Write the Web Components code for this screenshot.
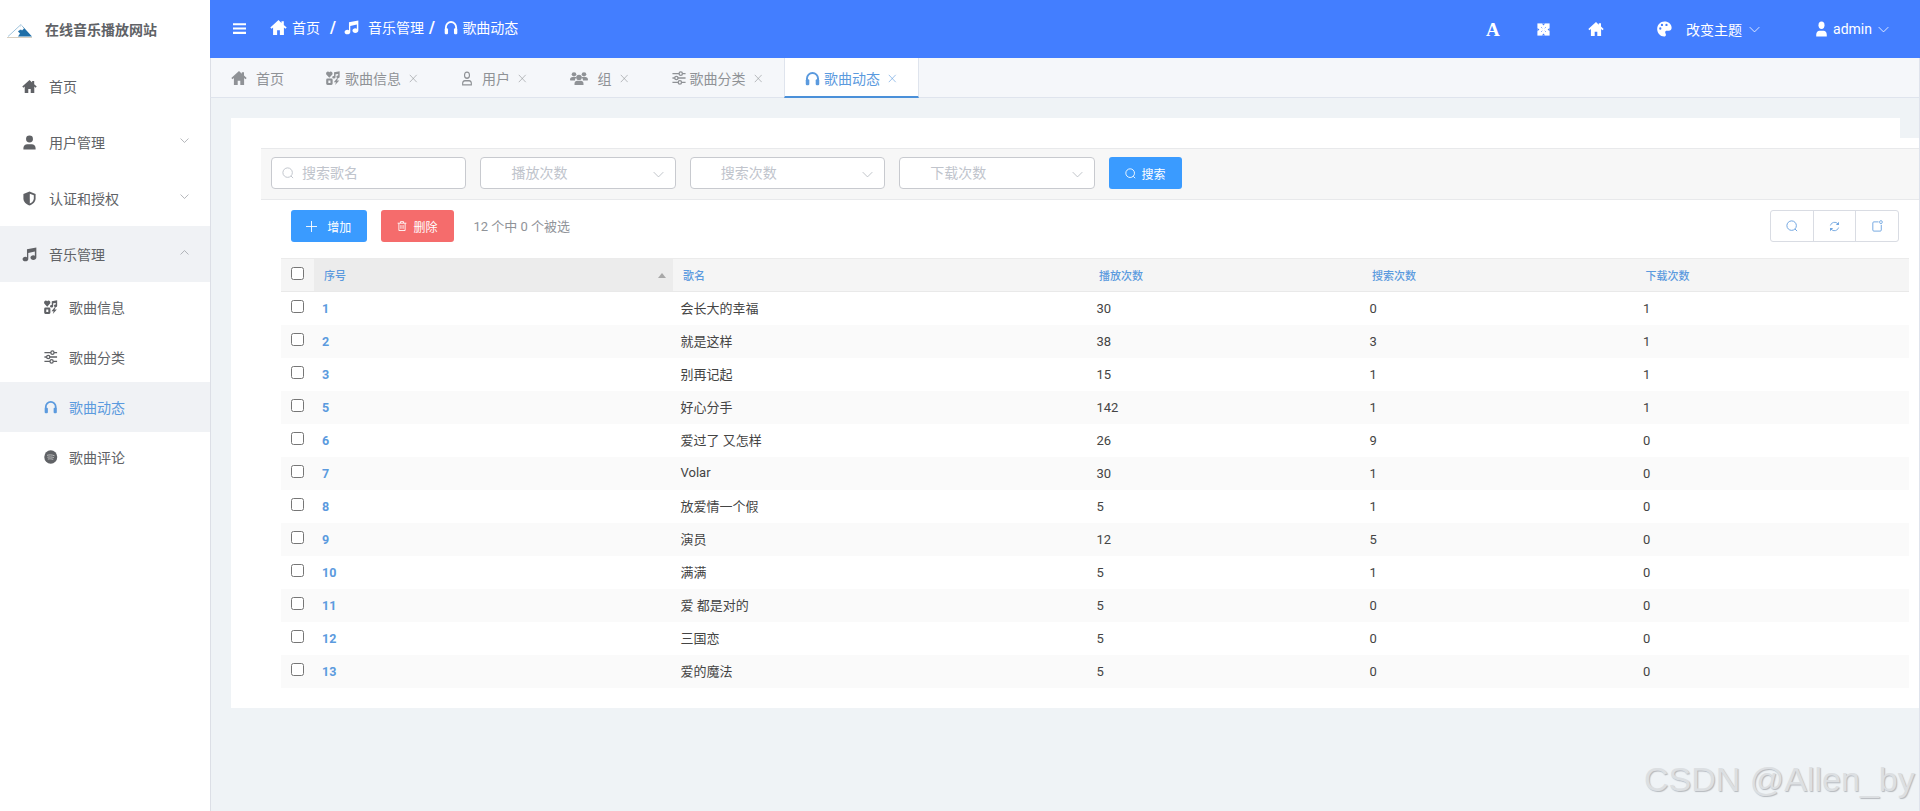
<!DOCTYPE html>
<html lang="zh">
<head>
<meta charset="utf-8">
<title>在线音乐播放网站</title>
<style>
html,body{margin:0;height:100%;overflow:hidden}
body{font-family:Roboto,"Noto Sans CJK SC",sans-serif;font-size:14px;color:#606266}
</style>
</head>
<body>
<music-app></music-app>
<script>
const ICONS = {
  home:'<path fill="currentColor" d="M8 1 .3 8l1.200 1.200L2.900 8v7h3.800v-4.300h2.600V15h3.800V8l1.400 1.200L15.700 8 13 5.600V2.200h-2.200V3.700z"/>',
  music:'<path fill="currentColor" d="M15.300.5 5.300 2.500v8.300a3 2.400 0 0 0-1.700-.4C1.900 10.400.6 11.500.6 12.800s1.300 2.500 3 2.500 3.100-1.100 3.100-2.500V6.300l7-1.400v4.400a3 2.400 0 0 0-1.600-.4c-1.700 0-3.100 1.100-3.100 2.400s1.400 2.500 3.100 2.500 3.200-1.100 3.200-2.500z"/>',
  headphones:'<path fill="none" stroke="currentColor" stroke-width="2.100" d="M2.100 10V8a5.900 5.900 0 0 1 11.800 0v2"/><rect fill="currentColor" x=".8" y="8.800" width="3.800" height="6.400" rx="1.300"/><rect fill="currentColor" x="11.400" y="8.800" width="3.800" height="6.400" rx="1.300"/>',
  user:'<circle fill="currentColor" cx="8" cy="4.300" r="3.700"/><path fill="currentColor" d="M1.500 15.500v-1.700c0-2.500 2-4 4-4h5c2 0 4 1.500 4 4v1.700z"/>',
  userline:'<circle fill="none" stroke="currentColor" stroke-width="1.500" cx="8" cy="4.500" r="3.300"/><path fill="none" stroke="currentColor" stroke-width="1.500" d="M2.200 14.800v-1.400c0-2 1.500-3 3-3h5.600c1.500 0 3 1 3 3v1.400z"/>',
  shield:'<path fill="currentColor" d="M8 .6 1.500 3.200v4.500c0 3.600 2.600 6.400 6.500 7.700 3.900-1.300 6.500-4.100 6.500-7.700V3.200z"/><path fill="#fff" d="M8.300 2.900v10.500c2.500-1.100 4.300-3 4.300-5.700V4.500z"/>',
  icons:'<path fill="currentColor" d="M3.800 7.600.6 4.300C-.6 2.800.4.600 2.200.5c.7 0 1.200.3 1.600.8.400-.5.900-.8 1.600-.8 1.800.1 2.800 2.300 1.600 3.800z"/><path fill="currentColor" d="M15.600.3 9.200 1.300v4.300a1.900 1.500 0 1 0 1.700 1.400V3.800l3-.4v1.800a1.900 1.500 0 1 0 1.700 1.300z"/><path fill="currentColor" fill-rule="evenodd" d="M1.700 8.700h4.400a1.500 1.500 0 0 1 1.500 1.500v4.200a1.500 1.500 0 0 1-1.500 1.500H1.700A1.500 1.500 0 0 1 .2 14.400v-4.200a1.500 1.500 0 0 1 1.500-1.500zm1 2.200v2.800h2.400v-2.800z"/><path fill="currentColor" d="M12.600 8.200 8.900 12.800h2.500l-1 3.200 4.800-5.200h-2.700l1.500-2.600z"/>',
  sliders:'<path fill="none" stroke="currentColor" stroke-width="1.600" d="M.5 3h15M.5 8h15M.5 13h15"/><circle cx="10" cy="3" r="1.900" fill="#fff" stroke="currentColor" stroke-width="1.500"/><circle cx="5" cy="8" r="1.900" fill="#fff" stroke="currentColor" stroke-width="1.500"/><circle cx="9" cy="13" r="1.900" fill="#fff" stroke="currentColor" stroke-width="1.500"/>',
  slidersTab:'<path fill="none" stroke="currentColor" stroke-width="1.600" d="M.5 3h15M.5 8h15M.5 13h15"/><circle cx="10" cy="3" r="1.900" fill="#f5f7fa" stroke="currentColor" stroke-width="1.500"/><circle cx="5" cy="8" r="1.900" fill="#f5f7fa" stroke="currentColor" stroke-width="1.500"/><circle cx="9" cy="13" r="1.900" fill="#f5f7fa" stroke="currentColor" stroke-width="1.500"/>',
  comment:'<circle fill="currentColor" cx="8" cy="8" r="7.700"/><path fill="none" stroke="#c9c9c9" stroke-width="1" stroke-linecap="round" d="M4 6c2.500-.7 5.500-.6 8 .4M4.500 8.200c2-.5 5-.4 6.800.4M5 10.300c2-.4 4-.3 5.500.3"/>',
  group:'<circle fill="currentColor" cx="4" cy="3.500" r="2.300"/><circle fill="currentColor" cx="14" cy="3.500" r="2.300"/><path fill="currentColor" d="M0 9.500C0 7.500 1.200 6.500 2.500 6.500h3c.3 0 .6.100.9.300-.8.800-1.400 1.900-1.400 3.200H.5z"/><path fill="currentColor" d="M18 9.500c0-2-1.200-3-2.500-3h-3c-.3 0-.6.100-.9.300.8.800 1.400 1.900 1.400 3.200h4.500z"/><circle fill="currentColor" cx="9" cy="6.800" r="2.800"/><path fill="currentColor" d="M4.500 15v-1.500c0-2 1.300-3 2.700-3h3.600c1.400 0 2.700 1 2.700 3V15z"/>',
  bars:'<path fill="currentColor" d="M0 1.200h13v2.100H0zM0 5.500h13v2.100H0zM0 9.800h13v2.100H0z"/>',
  expand:'<rect fill="currentColor" x=".5" y=".5" width="15" height="15"/><path fill="#437eff" d="M6 .5h4L8 3zM6 15.500h4L8 13zM.5 6v4L3 8zM15.500 6v4L13 8z"/><path fill="none" stroke="#437eff" stroke-width=".8" d="M5 5l1.500 1.500M11 5 9.500 6.500M5 11l1.500-1.500M11 11 9.500 9.500"/>',
  palette:'<path fill="currentColor" fill-rule="evenodd" d="M8 .5C3.600.5.200 3.800.2 8c0 4.200 3.400 7.500 7.300 7.500 1.400 0 2-.9 2-1.800 0-1.100-.8-1.500-.8-2.400 0-1 .8-1.500 1.800-1.500h2.200c1.600 0 2.900-1.200 2.900-3C15.600 3 12.200.5 8 .5zM3.500 8.700a1.200 1.200 0 1 1 0-2.400 1.200 1.200 0 0 1 0 2.400zm1.800-3.600a1.200 1.200 0 1 1 0-2.400 1.200 1.200 0 0 1 0 2.400zm4.800 0a1.200 1.200 0 1 1 0-2.400 1.200 1.200 0 0 1 0 2.400z"/>',
  close:'<path fill="none" stroke="currentColor" stroke-width="1.100" d="M1.500 1.500l13 13M14.500 1.500l-13 13"/>',
  down:'<path fill="none" stroke="currentColor" stroke-width="1.200" d="M1 4.500 8 11.500 15 4.500"/>',
  up:'<path fill="none" stroke="currentColor" stroke-width="1.200" d="M1 11.500 8 4.500 15 11.500"/>',
  search:'<circle fill="none" stroke="currentColor" stroke-width="1.300" cx="7.500" cy="7.500" r="6.300"/><path fill="none" stroke="currentColor" stroke-width="1.300" d="M12 12l2.800 2.800"/>',
  plus:'<path fill="none" stroke="currentColor" stroke-width="1.300" d="M8 0v16M0 8h16"/>',
  trash:'<path fill="none" stroke="currentColor" stroke-width="1.400" d="M1 3.500h14M5.500 3.300V1h5v2.300M3 3.500v11.700h10V3.500M6.300 6.500v6M9.700 6.500v6"/>',
  refresh:'<path fill="none" stroke="currentColor" stroke-width="1.300" d="M2 6.500A6.300 6.300 0 0 1 13 4.200M14 9.500A6.300 6.300 0 0 1 3 11.800"/><path fill="currentColor" d="M14.500 1.200v4.500H10zM1.500 14.800v-4.500H6z"/>',
  note:'<path fill="none" stroke="currentColor" stroke-width="1.300" d="M9.500 2.500H2.700a1.500 1.500 0 0 0-1.500 1.500v9.300a1.500 1.500 0 0 0 1.500 1.500h9.300a1.500 1.500 0 0 0 1.500-1.500V6.500"/><circle fill="none" stroke="currentColor" stroke-width="1.200" cx="13" cy="2.800" r="2"/>'
};

class XIcon extends HTMLElement {
  constructor(){
    super();
    const s = this.attachShadow({mode:'open'});
    const w = this.getAttribute('w')||16, h = this.getAttribute('h')||w;
    const vb = this.getAttribute('name')==='group' ? '0 0 18 16' : (this.getAttribute('name')==='bars' ? '0 0 13 13' : '0 0 16 16');
    s.innerHTML = `<style>:host{display:inline-flex;flex:none;width:${w}px;height:${h}px}svg{display:block;width:100%;height:100%}</style>
    <svg viewBox="${vb}" preserveAspectRatio="none">${ICONS[this.getAttribute('name')]||''}</svg>`;
  }
}
customElements.define('x-icon',XIcon);

class NavItem extends HTMLElement {
  constructor(){
    super();
    const s = this.attachShadow({mode:'open'});
    const sub = this.hasAttribute('sub'), arrow = this.getAttribute('arrow');
    s.innerHTML = `<style>
      :host{display:flex;align-items:center;box-sizing:border-box;height:${sub?50:56}px;padding-left:${sub?44:22}px;padding-right:21px;color:#606266;font-size:14px}
      :host([open]),:host([active]){background:#f0f2f5}
      :host([active]){color:#5b9ade}
      .t{margin-left:${sub?11.5:12}px;flex:1}
      .c{color:#909399;margin-top:-4px}
    </style>
    <x-icon name="${this.getAttribute('icon')}" w="${sub?13.5:15}" h="${sub?14:15}"></x-icon>
    <span class="t"><slot></slot></span>
    ${arrow?`<x-icon class="c" name="${arrow}" w="9" h="9"></x-icon>`:''}`;
  }
}
customElements.define('nav-item',NavItem);

class SideNav extends HTMLElement {
  constructor(){
    super();
    this.attachShadow({mode:'open'}).innerHTML = `<style>
      :host{display:block;width:210px;flex:none;background:#fff}
      .logo{height:58px;display:flex;align-items:center;padding-left:6px;box-sizing:border-box;font-weight:700;color:#606266}
      .logo svg{width:27px;height:14px;margin-top:4px}
      .logo span{margin-left:12px;color:#606266}
    </style>
    <div class="logo">
      <svg viewBox="0 0 27 14"><path d="M15 .5 2 12.500" stroke="#9fc3dc" stroke-width="1" fill="none"/><path d="M15 .5 26 12.500H12l2-3-2-2 2-2z" fill="#1f6fa8"/><path d="M15 .5l3 4-2 2-1-1-2 1z" fill="#fff"/><path d="M1 13.500h25" stroke="#d8cfc0" stroke-width="1"/></svg>
      <span>在线音乐播放网站</span>
    </div>
    <nav-item icon="home">首页</nav-item>
    <nav-item icon="user" arrow="down">用户管理</nav-item>
    <nav-item icon="shield" arrow="down">认证和授权</nav-item>
    <nav-item icon="music" arrow="up" open>音乐管理</nav-item>
    <nav-item sub icon="icons">歌曲信息</nav-item>
    <nav-item sub icon="sliders">歌曲分类</nav-item>
    <nav-item sub icon="headphones" active>歌曲动态</nav-item>
    <nav-item sub icon="comment">歌曲评论</nav-item>`;
  }
}
customElements.define('side-nav',SideNav);

class TopBar extends HTMLElement {
  constructor(){
    super();
    this.attachShadow({mode:'open'}).innerHTML = `<style>
      :host{display:flex;align-items:center;height:58px;background:#437eff;color:#fff;font-size:14px;padding-left:23px;box-sizing:border-box;flex:none}
      .crumb{display:flex;align-items:center;margin-left:24px;margin-top:-4px}
      .sep{font-weight:700;font-size:16px}
      .right{margin-left:auto;display:flex;align-items:center;padding-right:31px;margin-top:0}
      .f{font:700 19px "Liberation Serif",serif;width:12px;text-align:center;line-height:1}
      .bars{margin-top:-2px}
    </style>
    <x-icon class="bars" name="bars" w="13" h="13"></x-icon>
    <div class="crumb">
      <x-icon name="home" w="17" h="17"></x-icon><span style="margin-left:5px">首页</span>
      <span class="sep" style="margin-left:10px;margin-right:8px">/</span>
      <x-icon name="music" w="15" h="15"></x-icon><span style="margin-left:9px">音乐管理</span>
      <span class="sep" style="margin-left:5px;margin-right:9.5px">/</span>
      <x-icon name="headphones" w="14" h="15"></x-icon><span style="margin-left:4px">歌曲动态</span>
    </div>
    <div class="right">
      <span class="f">A</span>
      <x-icon name="expand" w="13" h="13" style="margin-left:39px"></x-icon>
      <x-icon name="home" w="16" h="16" style="margin-left:38px"></x-icon>
      <x-icon name="palette" w="15" h="16" style="margin-left:53px"></x-icon>
      <span style="margin-left:14px">改变主题</span>
      <x-icon name="down" w="11" h="11" style="margin-left:7px"></x-icon>
      <x-icon name="user" w="13" h="16" style="margin-left:55px"></x-icon>
      <span style="margin-left:5px">admin</span>
      <x-icon name="down" w="11" h="11" style="margin-left:6px"></x-icon>
    </div>`;
  }
}
customElements.define('top-bar',TopBar);

class TagTab extends HTMLElement {
  constructor(){
    super();
    const s = this.attachShadow({mode:'open'});
    const g = this.getAttribute('gap')||5, w=this.getAttribute('iw')||14;
    s.innerHTML = `<style>
      :host{display:flex;align-items:center;box-sizing:border-box;height:40px;padding:0 22px 0 21.5px;color:#8f9296;font-size:14px;flex:none}
      :host([active]){background:#fff;color:#5b9ade;border-left:1px solid #dfe4ed;border-right:1px solid #dfe4ed;border-bottom:2px solid #4a90d9;padding:2px 21.5px 0 20px}
      .x{margin-left:8px}
    </style>
    <x-icon name="${this.getAttribute('icon')}" w="${w}" h="${this.getAttribute('ih')||14}"></x-icon>
    <span style="margin-left:${g}px"><slot></slot></span>
    ${this.hasAttribute('closable')?'<x-icon class="x" name="close" w="8.5" h="9"></x-icon>':''}`;
  }
}
customElements.define('tag-tab',TagTab);

class TagTabs extends HTMLElement {
  constructor(){
    super();
    this.attachShadow({mode:'open'}).innerHTML = `<style>
      :host{display:flex;height:40px;box-sizing:border-box;background:#f5f7fa;border-bottom:1px solid #dfe4ed;border-left:1px solid #dcdfe6;border-right:1px solid #dfe3ec;flex:none;overflow:visible}
      tag-tab:first-of-type{padding-left:20px;padding-right:20.5px}
    </style>
    <tag-tab icon="home" iw="16" ih="16" gap="9">首页</tag-tab>
    <tag-tab icon="icons" closable>歌曲信息</tag-tab>
    <tag-tab icon="userline" iw="12" ih="15" gap="9" closable>用户</tag-tab>
    <tag-tab icon="group" iw="18" ih="15" gap="9.5" closable>组</tag-tab>
    <tag-tab icon="slidersTab" closable gap="4">歌曲分类</tag-tab>
    <tag-tab icon="headphones" iw="15" ih="15" gap="4" closable active>歌曲动态</tag-tab>`;
  }
}
customElements.define('tag-tabs',TagTabs);

class FilterField extends HTMLElement {
  constructor(){
    super();
    const sel = this.hasAttribute('select');
    this.attachShadow({mode:'open'}).innerHTML = `<style>
      :host{display:flex;align-items:center;box-sizing:border-box;width:195.4px;height:32px;background:#fff;border:1px solid #c8cacf;border-radius:4px;color:#c0c4cc;font-size:14px;padding:0 ${sel?'11px':'0'} 0 ${sel?'30px':'10px'};flex:none}
      span{flex:1;margin-top:-2px;${sel?'':'margin-left:8px;'}}
      .c{color:#b4b8bf;margin-top:3px}
    </style>
    ${sel?'':'<x-icon name="search" w="12" h="12"></x-icon>'}
    <span><slot></slot></span>
    ${sel?'<x-icon class="c" name="down" w="11" h="11"></x-icon>':''}`;
  }
}
customElements.define('filter-field',FilterField);

class UiButton extends HTMLElement {
  constructor(){
    super();
    const c = this.getAttribute('color')||'#3a9bff';
    this.attachShadow({mode:'open'}).innerHTML = `<style>
      :host{display:flex;align-items:center;justify-content:center;box-sizing:border-box;height:32px;background:${c};color:#fff;border-radius:3px;font-size:12px;flex:none;width:${this.getAttribute('w')}px}
      span{margin-left:${this.getAttribute('g')||8}px}
    </style>
    <x-icon name="${this.getAttribute('icon')}" w="${this.getAttribute('iw')||11}" h="${this.getAttribute('iw')||11}"></x-icon>
    <span><slot></slot></span>`;
  }
}
customElements.define('ui-button',UiButton);

class SearchBar extends HTMLElement {
  constructor(){
    super();
    this.attachShadow({mode:'open'}).innerHTML = `<style>
      :host{display:flex;gap:14px;box-sizing:border-box;height:52px;padding:8px 10px;background:#f7f7f7;border-top:1px solid #e8e9eb;border-bottom:1px solid #e8e9eb}
    </style>
    <filter-field>搜索歌名</filter-field>
    <filter-field select>播放次数</filter-field>
    <filter-field select>搜索次数</filter-field>
    <filter-field select>下载次数</filter-field>
    <ui-button icon="search" w="73" g="6">搜索</ui-button>`;
  }
}
customElements.define('search-bar',SearchBar);

class TableToolbar extends HTMLElement {
  constructor(){
    super();
    this.attachShadow({mode:'open'}).innerHTML = `<style>
      :host{display:flex;align-items:center;height:32px;margin-top:10px;padding:0 20px 0 30px}
      .info{margin-left:19.5px;margin-top:-2px;font-size:13px;color:#909399}
      .tools{margin-left:auto;display:flex;height:32px;box-sizing:border-box;border:1px solid #d9dce3;border-radius:3px;color:#6fa5e0}
      .tools div{width:41.67px;display:flex;align-items:center;justify-content:center}
      .tools div+div{border-left:1px solid #d9dce3}
    </style>
    <ui-button icon="plus" w="75.5" g="10">增加</ui-button>
    <ui-button icon="trash" iw="10" color="#f56c6c" w="73" g="6" style="margin-left:14.5px">删除</ui-button>
    <span class="info">12 个中 0 个被选</span>
    <div class="tools">
      <div><x-icon name="search" w="12" h="12"></x-icon></div>
      <div><x-icon name="refresh" w="11" h="11"></x-icon></div>
      <div><x-icon name="note" w="11" h="12"></x-icon></div>
    </div>`;
  }
}
customElements.define('table-toolbar',TableToolbar);

const SONGS = [
  [1,'会长大的幸福',30,0,1],[2,'就是这样',38,3,1],[3,'别再记起',15,1,1],[5,'好心分手',142,1,1],
  [6,'爱过了 又怎样',26,9,0],[7,'Volar',30,1,0],[8,'放爱情一个假',5,1,0],[9,'演员',12,5,0],
  [10,'满满',5,1,0],[11,'爱 都是对的',5,0,0],[12,'三国恋',5,0,0],[13,'爱的魔法',5,0,0]
];
class SongTable extends HTMLElement {
  constructor(){
    super();
    const rows = SONGS.map(r=>`<div class="row">
      <div class="ck"><input type="checkbox"></div>
      <div class="id">${r[0]}</div><div class="n"><span>${r[1]}</span></div><div>${r[2]}</div><div>${r[3]}</div><div>${r[4]}</div>
    </div>`).join('');
    this.attachShadow({mode:'open'}).innerHTML = `<style>
      :host{display:block;margin:16px 10.4px 0 20px;font-size:13px;color:#444}
      .row,.head{display:grid;grid-template-columns:33px 359px 416px 273px 273.6px 1fr;align-items:stretch}
      .row{height:33px}
      .row>div{display:flex;align-items:center;padding-left:7.5px;min-width:0}
      .row:nth-child(even){background:#fafafa}
      .n span{margin-top:-2px}
      .head{height:34px;box-sizing:border-box;background:#f5f5f5;border-top:1px solid #ebebeb;border-bottom:1px solid #e9e9e9;font-size:11px;font-weight:500;color:#5b9ade}
      .head>div{display:flex;align-items:center;padding-left:10px}
      .head .s{background:#ececec;position:relative;justify-content:space-between;padding-right:7px}
      .tri{width:0;height:0;border:4.5px solid transparent;border-top:0;border-bottom:5px solid #a8a8a8}
      .row>.id{font-weight:700;color:#5b9ade;font-size:12.5px;padding-left:8px}
      .ck{padding-left:10.4px!important;align-items:flex-start!important;padding-top:8px}
      .head .ck{padding-top:8px}
      input{margin:0;width:13px;height:13px;display:block}
    </style>
    <div class="head">
      <div class="ck"><input type="checkbox"></div>
      <div class="s"><span>序号</span><i class="tri"></i></div>
      <div>歌名</div><div>播放次数</div><div>搜索次数</div><div>下载次数</div>
    </div>
    <div>${rows}</div>`;
  }
}
customElements.define('song-table',SongTable);

class ContentCard extends HTMLElement {
  constructor(){
    super();
    this.attachShadow({mode:'open'}).innerHTML = `<style>
      :host{display:block;flex:1;min-height:0;background:#eff3f6;border-left:1px solid #dcdfe6;border-right:1px solid #dfe3ec;padding:20px 0 0 20px}
      .cap{height:20px;background:#fff;margin-right:19px}
      .body{background:#fff;padding:10px 0 20px 30px}
    </style>
    <div class="cap"></div>
    <div class="body">
      <search-bar></search-bar>
      <table-toolbar></table-toolbar>
      <song-table></song-table>
    </div>`;
  }
}
customElements.define('content-card',ContentCard);

class MusicApp extends HTMLElement {
  constructor(){
    super();
    this.attachShadow({mode:'open'}).innerHTML = `<style>
      :host{display:flex;height:811px;width:1920px;position:relative;overflow:hidden;background:#fff}
      .main{flex:1;min-width:0;display:flex;flex-direction:column}
      .wm{position:absolute;left:1644px;top:759px;font:34px/40px "Liberation Sans",sans-serif;color:#dcdfe2;text-shadow:1px 1px 1px #b5b9be;white-space:nowrap}
    </style>
    <side-nav></side-nav>
    <div class="main">
      <top-bar></top-bar>
      <tag-tabs></tag-tabs>
      <content-card></content-card>
    </div>
    <div class="wm">CSDN @Allen_by</div>`;
  }
}
customElements.define('music-app',MusicApp);
</script>
</body>
</html>
